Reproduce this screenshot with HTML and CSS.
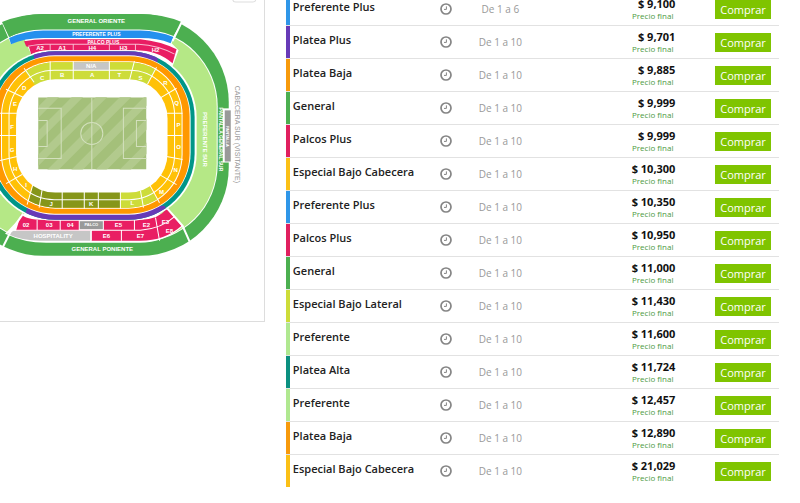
FILE: index.html
```
<!DOCTYPE html>
<html lang="es">
<head>
    <meta charset="UTF-8">
    <meta name="viewport" content="width=device-width, initial-scale=1.0">
    <title>Entradas</title>
    <link rel="stylesheet" href="styles.css">
</head>
<body>

    <!-- clock icon shared by all rows -->
    <svg class="sprite" width="0" height="0" aria-hidden="true">
        <symbol id="clock" viewBox="0 0 12 12">
            <circle cx="6" cy="6" r="5" fill="none" stroke="#858585" stroke-width="1.7"/>
            <path d="M6.4 3.4V6.4H4" fill="none" stroke="#858585" stroke-width="1"/>
        </symbol>
    </svg>

    <main class="page">
        <section class="map">
            <svg class="stadium" viewBox="0 0 263 320" role="img" aria-label="Mapa del estadio">
                <defs>
                    <clipPath id="topSide"><path d="M37 88L17 60L26 30H144L164 56L144 88Z"/></clipPath>
                    <clipPath id="bottomOlive"><path d="M34 180L25 215H120V180Z"/></clipPath>
                    <clipPath id="bottomLime"><path d="M120 180H145L162 208L155 215H120Z"/></clipPath>
                    <clipPath id="purpleSide"><path d="M35 62L31 45H158L157 62ZM28 205L21 225H175L164 205Z"/></clipPath>
                    <clipPath id="field"><rect x="38" y="97" width="108" height="72"/></clipPath>
                </defs>

                <!-- general and preferente rings -->
                <rect x="-45" y="14" width="273" height="241" rx="88" fill="#4caf50"/>
                <rect x="-34" y="29" width="251" height="212" rx="77" fill="#fff"/>
                <rect x="-33" y="30" width="249" height="210" rx="76" fill="#b5e886"/>

                <!-- top boxes -->
                <path d="M-2 14L11 44L24 38L31 54L40 60H155L172 66L178 50L171 43L182 22L150 28H30L10 38L2 20Z" fill="#fff"/>
                <path d="M2 22Q22 14 43 14H139Q162 14 181 22L173 36Q158 29.500 139 29.500H43Q24 29.500 9 37Z" fill="#4caf50"/>
                <path d="M9 38Q26 30.500 43 30.500H140Q158 31 173 37L170 43Q157 38 140 38H43Q25 38 11 44Z" fill="#2490ee"/>
                <path d="M24 41Q34 39 45 39H140Q160 41 176 49L172 63Q157 50 135 50H48Q39 50 31 54L29 47L26 46Z" fill="#e91e63"/>
                <path d="M28 46Q38 44 45 44H138Q158 45 174 54M50 44V50M73 44V50M109 44V50M135 44V50" class="line thin"/>
                <path d="M182 20L172 41" class="line gap"/>

                <!-- bottom boxes -->
                <path d="M5 233L24 213H166L183 225Q163 242 139 242H46Q24 242 5 233Z" fill="#fff"/>
                <path d="M21 213Q25 219 44 219H141Q159 218 166 208L181 225Q164 240 140 240H91V230H16Z" fill="#e91e63"/>
                <path d="M14 230H90V240H40Q22 240 7 233Z" fill="#c6c6c6"/>
                <rect x="79" y="220" width="24" height="9" fill="#999" stroke="#fff"/>
                <path d="M14 229.500H140Q161 228 174 216M37 219V229M60 219V229M134 219V229M155 217L159 240M121 230V240M91 230V240" class="line"/>
                <path d="M23 213L10 232L0 252M166 207L182 225L190 243" class="line gap"/>

                <!-- platea rings -->
                <rect x="-13" y="50" width="209" height="170" rx="67" fill="#fff"/>
                <rect x="-11" y="51" width="205" height="168" rx="66" fill="#009688"/>
                <rect x="-11" y="51" width="205" height="168" rx="66" fill="#673ab7" clip-path="url(#purpleSide)"/>
                <rect x="-7" y="55" width="197" height="159" rx="62" fill="#fff"/>
                <rect x="-6" y="56" width="195" height="157" rx="60" fill="#ff9800"/>
                <rect x="1" y="61" width="181" height="147" rx="54" fill="#fff"/>
                <rect x="2" y="62" width="179" height="145" rx="53" fill="#ffc107"/>
                <rect x="2" y="62" width="179" height="145" rx="53" fill="#cddc39" clip-path="url(#topSide)"/>
                <rect x="2" y="62" width="179" height="145" rx="53" fill="#869619" clip-path="url(#bottomOlive)"/>
                <rect x="2" y="62" width="179" height="145" rx="53" fill="#cddc39" clip-path="url(#bottomLime)"/>
                <rect x="73" y="62" width="36" height="8" fill="#c6c6c6"/>
                <rect x="9" y="70" width="165" height="129" rx="45" class="line"/>
                <path d="M50 61V80M73 61V80M109 61V80M134 61L129 80M24 68L34 82M156 67L147 84M6 89L23 97M176 88L159 98M0 113H17M0 135H17M0 160L17 156M166 113H182M166 135H182M166 156L182 159M6 183L22 174M159 174L176 184M33 183L27 204M42 189L39 207M62 191V208M84 191V208M98 191V208M120 191V208M140 190L143 207M149 184L159 202" class="line"/>
                <rect x="16" y="79" width="151" height="113" rx="39" fill="#fff"/>

                <!-- field -->
                <g clip-path="url(#field)">
                    <rect x="38" y="97" width="108" height="72" fill="#a4c07a"/>
                    <path d="M20 130L70 80M20 154L95 79M20 178L120 78M42 180L144 78M66 180L168 78M90 180L180 90M114 180L180 114" stroke="#b2ca8d" stroke-width="8"/>
                </g>
                <path d="M38 108H61V158H38M38 120H47V146H38M146 108H123V158H146M146 120H136V146H146M91.500 97V169" class="mark"/>
                <circle cx="91.500" cy="133" r="11" class="mark"/>

                <!-- pantalla -->
                <rect x="222" y="108" width="9" height="54" fill="#fff"/>
                <rect x="224" y="110" width="6" height="51" fill="#999"/>

                <g class="label">
                    <text x="96" y="22.500">GENERAL ORIENTE</text>
                    <text x="96" y="36" class="small">PREFERENTE PLUS</text>
                    <text x="103" y="43.500" class="small">PALCO PLUS</text>
                    <text x="40" y="49.500">A2</text>
                    <text x="62" y="49.500">A1</text>
                    <text x="92" y="49.500">H4</text>
                    <text x="123" y="49.500">H3</text>
                    <text x="155" y="52">H2</text>
                    <text x="91" y="68">N/A</text>
                    <text x="62" y="77">B</text>
                    <text x="92" y="77">A</text>
                    <text x="119" y="77">T</text>
                    <text x="140" y="80">S</text>
                    <text x="42" y="80">C</text>
                    <text x="24" y="90">D</text>
                    <text x="15" y="106">E</text>
                    <text x="12" y="129">F</text>
                    <text x="12" y="152">G</text>
                    <text x="15" y="170">H</text>
                    <text x="26" y="186">I</text>
                    <text x="51" y="205">J</text>
                    <text x="91" y="205">K</text>
                    <text x="132" y="204">L</text>
                    <text x="161" y="193">M</text>
                    <text x="175" y="171">N</text>
                    <text x="178" y="149">O</text>
                    <text x="178" y="127">P</text>
                    <text x="176" y="105">Q</text>
                    <text x="165" y="85">R</text>
                    <text x="26" y="226.500">02</text>
                    <text x="49" y="226.500">03</text>
                    <text x="70" y="226.500">04</text>
                    <text x="91" y="225" class="tiny">PALCO</text>
                    <text x="118" y="226.500">E5</text>
                    <text x="146" y="226.500">E2</text>
                    <text x="165" y="223.500">E3</text>
                    <text x="169" y="232">E8</text>
                    <text x="53" y="237.500">HOSPITALITY</text>
                    <text x="106" y="237.500">E6</text>
                    <text x="140" y="237.500">E7</text>
                    <text x="102" y="250">GENERAL PONIENTE</text>
                    <text transform="translate(202 139) rotate(90)">PREFERENTE SUR</text>
                    <text transform="translate(218 139) rotate(90)" class="small">PANTALLA GENERAL SUR</text>
                    <text transform="translate(225 136) rotate(90)" class="tiny">PANTALLA</text>
                </g>
                <text transform="translate(234 134) rotate(90)" class="end">CABECERA SUR (VISITANTE)</text>
                <path d="M232 -1Q232 2 235 2H252Q255 2 255 -1" fill="none" stroke="#ddd"/>
            </svg>
        </section>

        <table class="tickets">
            <colgroup>
                <col class="col-name"><col class="col-icon"><col class="col-qty"><col class="col-price"><col>
            </colgroup>
            <tbody>
                <tr class="blue"><th scope="row">Preferente Plus</th><td class="icon"><svg><use href="#clock"/></svg></td><td class="qty">De 1 a 6</td><td class="price"><b>$ 9,100</b><small>Precio final</small></td><td class="buy"><button>Comprar</button></td></tr>
                <tr class="purple"><th scope="row">Platea Plus</th><td class="icon"><svg><use href="#clock"/></svg></td><td class="qty">De 1 a 10</td><td class="price"><b>$ 9,701</b><small>Precio final</small></td><td class="buy"><button>Comprar</button></td></tr>
                <tr class="orange"><th scope="row">Platea Baja</th><td class="icon"><svg><use href="#clock"/></svg></td><td class="qty">De 1 a 10</td><td class="price"><b>$ 9,885</b><small>Precio final</small></td><td class="buy"><button>Comprar</button></td></tr>
                <tr class="green"><th scope="row">General</th><td class="icon"><svg><use href="#clock"/></svg></td><td class="qty">De 1 a 10</td><td class="price"><b>$ 9,999</b><small>Precio final</small></td><td class="buy"><button>Comprar</button></td></tr>
                <tr class="pink"><th scope="row">Palcos Plus</th><td class="icon"><svg><use href="#clock"/></svg></td><td class="qty">De 1 a 10</td><td class="price"><b>$ 9,999</b><small>Precio final</small></td><td class="buy"><button>Comprar</button></td></tr>
                <tr class="yellow"><th scope="row">Especial Bajo Cabecera</th><td class="icon"><svg><use href="#clock"/></svg></td><td class="qty">De 1 a 10</td><td class="price"><b>$ 10,300</b><small>Precio final</small></td><td class="buy"><button>Comprar</button></td></tr>
                <tr class="blue"><th scope="row">Preferente Plus</th><td class="icon"><svg><use href="#clock"/></svg></td><td class="qty">De 1 a 10</td><td class="price"><b>$ 10,350</b><small>Precio final</small></td><td class="buy"><button>Comprar</button></td></tr>
                <tr class="pink"><th scope="row">Palcos Plus</th><td class="icon"><svg><use href="#clock"/></svg></td><td class="qty">De 1 a 10</td><td class="price"><b>$ 10,950</b><small>Precio final</small></td><td class="buy"><button>Comprar</button></td></tr>
                <tr class="green"><th scope="row">General</th><td class="icon"><svg><use href="#clock"/></svg></td><td class="qty">De 1 a 10</td><td class="price"><b>$ 11,000</b><small>Precio final</small></td><td class="buy"><button>Comprar</button></td></tr>
                <tr class="lime"><th scope="row">Especial Bajo Lateral</th><td class="icon"><svg><use href="#clock"/></svg></td><td class="qty">De 1 a 10</td><td class="price"><b>$ 11,430</b><small>Precio final</small></td><td class="buy"><button>Comprar</button></td></tr>
                <tr class="light"><th scope="row">Preferente</th><td class="icon"><svg><use href="#clock"/></svg></td><td class="qty">De 1 a 10</td><td class="price"><b>$ 11,600</b><small>Precio final</small></td><td class="buy"><button>Comprar</button></td></tr>
                <tr class="teal"><th scope="row">Platea Alta</th><td class="icon"><svg><use href="#clock"/></svg></td><td class="qty">De 1 a 10</td><td class="price"><b>$ 11,724</b><small>Precio final</small></td><td class="buy"><button>Comprar</button></td></tr>
                <tr class="light"><th scope="row">Preferente</th><td class="icon"><svg><use href="#clock"/></svg></td><td class="qty">De 1 a 10</td><td class="price"><b>$ 12,457</b><small>Precio final</small></td><td class="buy"><button>Comprar</button></td></tr>
                <tr class="orange"><th scope="row">Platea Baja</th><td class="icon"><svg><use href="#clock"/></svg></td><td class="qty">De 1 a 10</td><td class="price"><b>$ 12,890</b><small>Precio final</small></td><td class="buy"><button>Comprar</button></td></tr>
                <tr class="yellow"><th scope="row">Especial Bajo Cabecera</th><td class="icon"><svg><use href="#clock"/></svg></td><td class="qty">De 1 a 10</td><td class="price"><b>$ 21,029</b><small>Precio final</small></td><td class="buy"><button>Comprar</button></td></tr>
            </tbody>
        </table>
    </main>

</body>
</html>
```
FILE: styles.css
```
body {
    margin: 0;
    background: #fff;
    font-family: "Open Sans", sans-serif;
    color: #222;
    overflow: hidden;
}
.sprite {
    position: absolute;
}
.page {
    display: flex;
    align-items: flex-start;
    gap: 21px;
    padding-right: 21px;
}
.map {
    box-sizing: border-box;
    width: 34%;
    flex-shrink: 0;
    border-right: 1px solid #ddd;
    border-bottom: 1px solid #ddd;
}

/* stadium */
.stadium {
    display: block;
    width: 100%;
}
.line {
    fill: none;
    stroke: #fff;
    stroke-width: 1;
}
.thin {
    stroke-opacity: 0.7;
}
.gap {
    stroke-width: 2;
}
.mark {
    fill: none;
    stroke: #d3e0be;
    stroke-width: 1;
}
.label {
    font-family: "Liberation Sans", Arial, sans-serif;
    font-size: 6px;
    font-weight: bold;
    fill: #fff;
    text-anchor: middle;
}
.label .small {
    font-size: 5px;
}
.label .tiny {
    font-size: 4px;
}
.end {
    font-family: "Liberation Sans", Arial, sans-serif;
    font-size: 7px;
    fill: #999;
    text-anchor: middle;
}

/* ticket list */
.tickets {
    flex: 1;
    min-width: 0;
    table-layout: fixed;
    border-spacing: 0;
    margin-top: -7px; /* first row is partly scrolled away */
}
.col-name {
    width: 27%;
}
.col-icon {
    width: 11%;
}
.col-qty {
    width: 11%;
}
.col-price {
    width: 30%;
}
.tickets th,
.tickets td {
    box-sizing: border-box;
    height: 33px;
    padding: 0;
    border-bottom: 1px solid #e2e2e2;
    vertical-align: middle;
}
.tickets tr:last-child th,
.tickets tr:last-child td {
    border-bottom-color: transparent;
}
.tickets th {
    padding: 0 0 5px 7px;
    box-shadow: inset 4px 0 var(--zone);
    font-size: 11px;
    font-weight: 600;
    text-align: left;
    white-space: nowrap;
}
.tickets .icon {
    padding-bottom: 1px;
    text-align: center;
}
.icon svg {
    display: block;
    width: 12px;
    height: 12px;
    margin: 0 auto;
}
.tickets .qty {
    padding-bottom: 1px;
    font-size: 10px;
    color: #999;
    text-align: center;
}
.tickets .price {
    text-align: right;
}
.price b {
    display: block;
    font-size: 11px;
    line-height: 13px;
    color: #111;
}
.price small {
    display: block;
    padding-right: 2px;
    font-size: 8px;
    line-height: 12px;
    color: #4c9a41;
}
.tickets .buy {
    padding-right: 8px;
}
.buy button {
    display: block;
    width: 56px;
    height: 19px;
    margin-left: auto;
    padding: 0;
    border: none;
    background: #7fc400;
    color: #fff;
    font-family: inherit;
    font-size: 11px;
    line-height: 19px;
    cursor: pointer;
}
.buy button:hover {
    background: #70ad00;
}

.blue { --zone: #2f96e8; }
.purple { --zone: #673ab7; }
.orange { --zone: #f79a0c; }
.green { --zone: #4caf50; }
.pink { --zone: #e0205f; }
.yellow { --zone: #fbc016; }
.lime { --zone: #cddc39; }
.light { --zone: #b0e890; }
.teal { --zone: #0b9080; }
```
